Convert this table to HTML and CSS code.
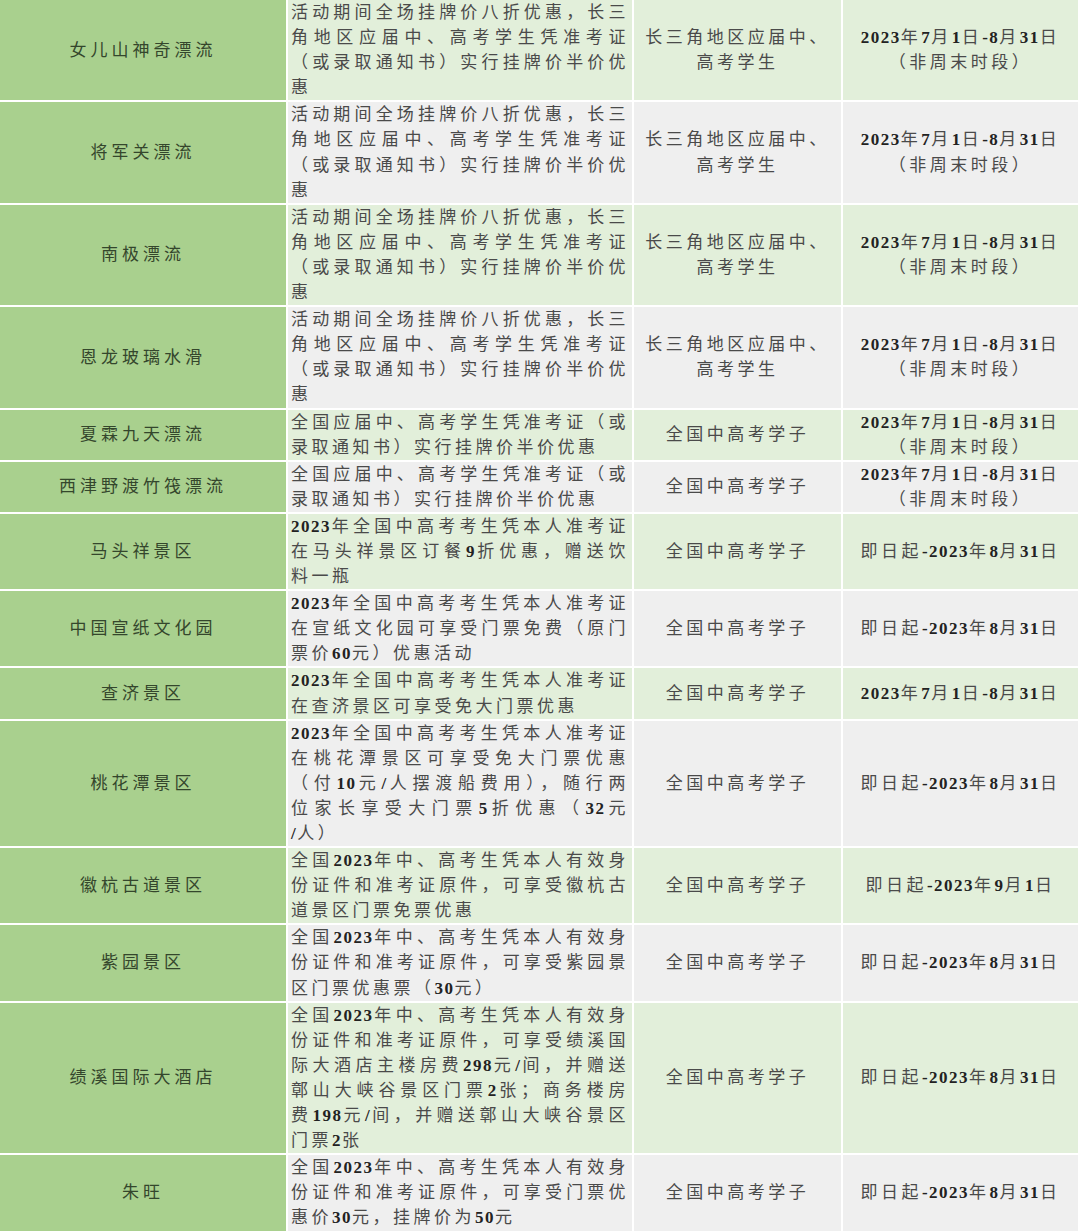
FILE: index.html
```html
<!DOCTYPE html>
<html lang="zh-CN">
<head>
<meta charset="utf-8">
<title>中高考学子优惠</title>
<link rel="stylesheet" href="styles.css">
</head>
<body>
<div class="table">
  <!-- row 1 -->
  <div class="c name">女儿山神奇漂流</div>
  <div class="c desc g"><span class="ln">活动期间全场挂牌价八折优惠，长三</span><span class="ln">角地区应届中、高考学生凭准考证</span><span class="ln">（或录取通知书）实行挂牌价半价优</span><span class="ln end">惠</span></div>
  <div class="c mid g"><div class="t">长三角地区应届中、<br>高考学生</div></div>
  <div class="c mid g"><div class="t"><span class="n">2023</span>年<span class="n">7</span>月<span class="n">1</span>日<span class="n">-8</span>月<span class="n">31</span>日<br>（非周末时段）</div></div>
  <!-- row 2 -->
  <div class="c name">将军关漂流</div>
  <div class="c desc w"><span class="ln">活动期间全场挂牌价八折优惠，长三</span><span class="ln">角地区应届中、高考学生凭准考证</span><span class="ln">（或录取通知书）实行挂牌价半价优</span><span class="ln end">惠</span></div>
  <div class="c mid w"><div class="t">长三角地区应届中、<br>高考学生</div></div>
  <div class="c mid w"><div class="t"><span class="n">2023</span>年<span class="n">7</span>月<span class="n">1</span>日<span class="n">-8</span>月<span class="n">31</span>日<br>（非周末时段）</div></div>
  <!-- row 3 -->
  <div class="c name">南极漂流</div>
  <div class="c desc g"><span class="ln">活动期间全场挂牌价八折优惠，长三</span><span class="ln">角地区应届中、高考学生凭准考证</span><span class="ln">（或录取通知书）实行挂牌价半价优</span><span class="ln end">惠</span></div>
  <div class="c mid g"><div class="t">长三角地区应届中、<br>高考学生</div></div>
  <div class="c mid g"><div class="t"><span class="n">2023</span>年<span class="n">7</span>月<span class="n">1</span>日<span class="n">-8</span>月<span class="n">31</span>日<br>（非周末时段）</div></div>
  <!-- row 4 -->
  <div class="c name">恩龙玻璃水滑</div>
  <div class="c desc w"><span class="ln">活动期间全场挂牌价八折优惠，长三</span><span class="ln">角地区应届中、高考学生凭准考证</span><span class="ln">（或录取通知书）实行挂牌价半价优</span><span class="ln end">惠</span></div>
  <div class="c mid w"><div class="t">长三角地区应届中、<br>高考学生</div></div>
  <div class="c mid w"><div class="t"><span class="n">2023</span>年<span class="n">7</span>月<span class="n">1</span>日<span class="n">-8</span>月<span class="n">31</span>日<br>（非周末时段）</div></div>
  <!-- row 5 -->
  <div class="c name">夏霖九天漂流</div>
  <div class="c desc g"><span class="ln">全国应届中、高考学生凭准考证（或</span><span class="ln end">录取通知书）实行挂牌价半价优惠</span></div>
  <div class="c mid g"><div class="t">全国中高考学子</div></div>
  <div class="c mid g"><div class="t"><span class="n">2023</span>年<span class="n">7</span>月<span class="n">1</span>日<span class="n">-8</span>月<span class="n">31</span>日<br>（非周末时段）</div></div>
  <!-- row 6 -->
  <div class="c name">西津野渡竹筏漂流</div>
  <div class="c desc w"><span class="ln">全国应届中、高考学生凭准考证（或</span><span class="ln end">录取通知书）实行挂牌价半价优惠</span></div>
  <div class="c mid w"><div class="t">全国中高考学子</div></div>
  <div class="c mid w"><div class="t"><span class="n">2023</span>年<span class="n">7</span>月<span class="n">1</span>日<span class="n">-8</span>月<span class="n">31</span>日<br>（非周末时段）</div></div>
  <!-- row 7 -->
  <div class="c name">马头祥景区</div>
  <div class="c desc g"><span class="ln"><span class="n">2023</span>年全国中高考考生凭本人准考证</span><span class="ln">在马头祥景区订餐<span class="n">9</span>折优惠，赠送饮</span><span class="ln end">料一瓶</span></div>
  <div class="c mid g"><div class="t">全国中高考学子</div></div>
  <div class="c mid g"><div class="t">即日起<span class="n">-2023</span>年<span class="n">8</span>月<span class="n">31</span>日</div></div>
  <!-- row 8 -->
  <div class="c name">中国宣纸文化园</div>
  <div class="c desc w"><span class="ln"><span class="n">2023</span>年全国中高考考生凭本人准考证</span><span class="ln">在宣纸文化园可享受门票免费（原门</span><span class="ln end">票价<span class="n">60</span>元）优惠活动</span></div>
  <div class="c mid w"><div class="t">全国中高考学子</div></div>
  <div class="c mid w"><div class="t">即日起<span class="n">-2023</span>年<span class="n">8</span>月<span class="n">31</span>日</div></div>
  <!-- row 9 -->
  <div class="c name">查济景区</div>
  <div class="c desc g"><span class="ln"><span class="n">2023</span>年全国中高考考生凭本人准考证</span><span class="ln end">在查济景区可享受免大门票优惠</span></div>
  <div class="c mid g"><div class="t">全国中高考学子</div></div>
  <div class="c mid g"><div class="t"><span class="n">2023</span>年<span class="n">7</span>月<span class="n">1</span>日<span class="n">-8</span>月<span class="n">31</span>日</div></div>
  <!-- row 10 -->
  <div class="c name">桃花潭景区</div>
  <div class="c desc w"><span class="ln"><span class="n">2023</span>年全国中高考考生凭本人准考证</span><span class="ln">在桃花潭景区可享受免大门票优惠</span><span class="ln">（付<span class="n">10</span>元<span class="n">/</span>人摆渡船费用），随行两</span><span class="ln">位家长享受大门票<span class="n">5</span>折优惠（<span class="n">32</span>元</span><span class="ln end"><span class="n">/</span>人）</span></div>
  <div class="c mid w"><div class="t">全国中高考学子</div></div>
  <div class="c mid w"><div class="t">即日起<span class="n">-2023</span>年<span class="n">8</span>月<span class="n">31</span>日</div></div>
  <!-- row 11 -->
  <div class="c name">徽杭古道景区</div>
  <div class="c desc g"><span class="ln">全国<span class="n">2023</span>年中、高考生凭本人有效身</span><span class="ln">份证件和准考证原件，可享受徽杭古</span><span class="ln end">道景区门票免票优惠</span></div>
  <div class="c mid g"><div class="t">全国中高考学子</div></div>
  <div class="c mid g"><div class="t">即日起<span class="n">-2023</span>年<span class="n">9</span>月<span class="n">1</span>日</div></div>
  <!-- row 12 -->
  <div class="c name">紫园景区</div>
  <div class="c desc w"><span class="ln">全国<span class="n">2023</span>年中、高考生凭本人有效身</span><span class="ln">份证件和准考证原件，可享受紫园景</span><span class="ln end">区门票优惠票（<span class="n">30</span>元）</span></div>
  <div class="c mid w"><div class="t">全国中高考学子</div></div>
  <div class="c mid w"><div class="t">即日起<span class="n">-2023</span>年<span class="n">8</span>月<span class="n">31</span>日</div></div>
  <!-- row 13 -->
  <div class="c name">绩溪国际大酒店</div>
  <div class="c desc g"><span class="ln">全国<span class="n">2023</span>年中、高考生凭本人有效身</span><span class="ln">份证件和准考证原件，可享受绩溪国</span><span class="ln">际大酒店主楼房费<span class="n">298</span>元<span class="n">/</span>间，并赠送</span><span class="ln">鄣山大峡谷景区门票<span class="n">2</span>张；商务楼房</span><span class="ln">费<span class="n">198</span>元<span class="n">/</span>间，并赠送鄣山大峡谷景区</span><span class="ln end">门票<span class="n">2</span>张</span></div>
  <div class="c mid g"><div class="t">全国中高考学子</div></div>
  <div class="c mid g"><div class="t">即日起<span class="n">-2023</span>年<span class="n">8</span>月<span class="n">31</span>日</div></div>
  <!-- row 14 -->
  <div class="c name">朱旺</div>
  <div class="c desc w"><span class="ln">全国<span class="n">2023</span>年中、高考生凭本人有效身</span><span class="ln">份证件和准考证原件，可享受门票优</span><span class="ln end">惠价<span class="n">30</span>元，挂牌价为<span class="n">50</span>元</span></div>
  <div class="c mid w"><div class="t">全国中高考学子</div></div>
  <div class="c mid w"><div class="t">即日起<span class="n">-2023</span>年<span class="n">8</span>月<span class="n">31</span>日</div></div>
</div>
</body>
</html>
```

FILE: styles.css
```css
html, body {
  margin: 0;
  padding: 0;
  background: #ffffff;
}

body {
  font-family: "Liberation Serif", "Noto Sans CJK SC", serif;
  font-size: 17px;
  line-height: 25.1px;
  color: #4a4a4a;
}

.table {
  display: grid;
  grid-template-columns: 286px 344px 207px 235px;
  gap: 2px;
  width: 1080px;
  background: #ffffff;
}

.c {
  display: flex;
  flex-direction: column;
  justify-content: center;
  letter-spacing: 3.5px;
}

.name {
  background: #a9d08e;
  color: #34462c;
  align-items: center;
  text-align: center;
  letter-spacing: 4px;
}

.g {
  background: #e2efda;
}

.w {
  background: #efefef;
}

.desc {
  padding: 0 3px;
  justify-content: flex-start;
}

.ln {
  display: block;
  text-align: justify;
  text-align-last: justify;
}

.ln.end {
  text-align-last: left;
}

.mid {
  align-items: stretch;
}

.t {
  text-align: center;
}

.n {
  font-weight: bold;
  color: #222222;
  letter-spacing: 1.5px;
}
```
